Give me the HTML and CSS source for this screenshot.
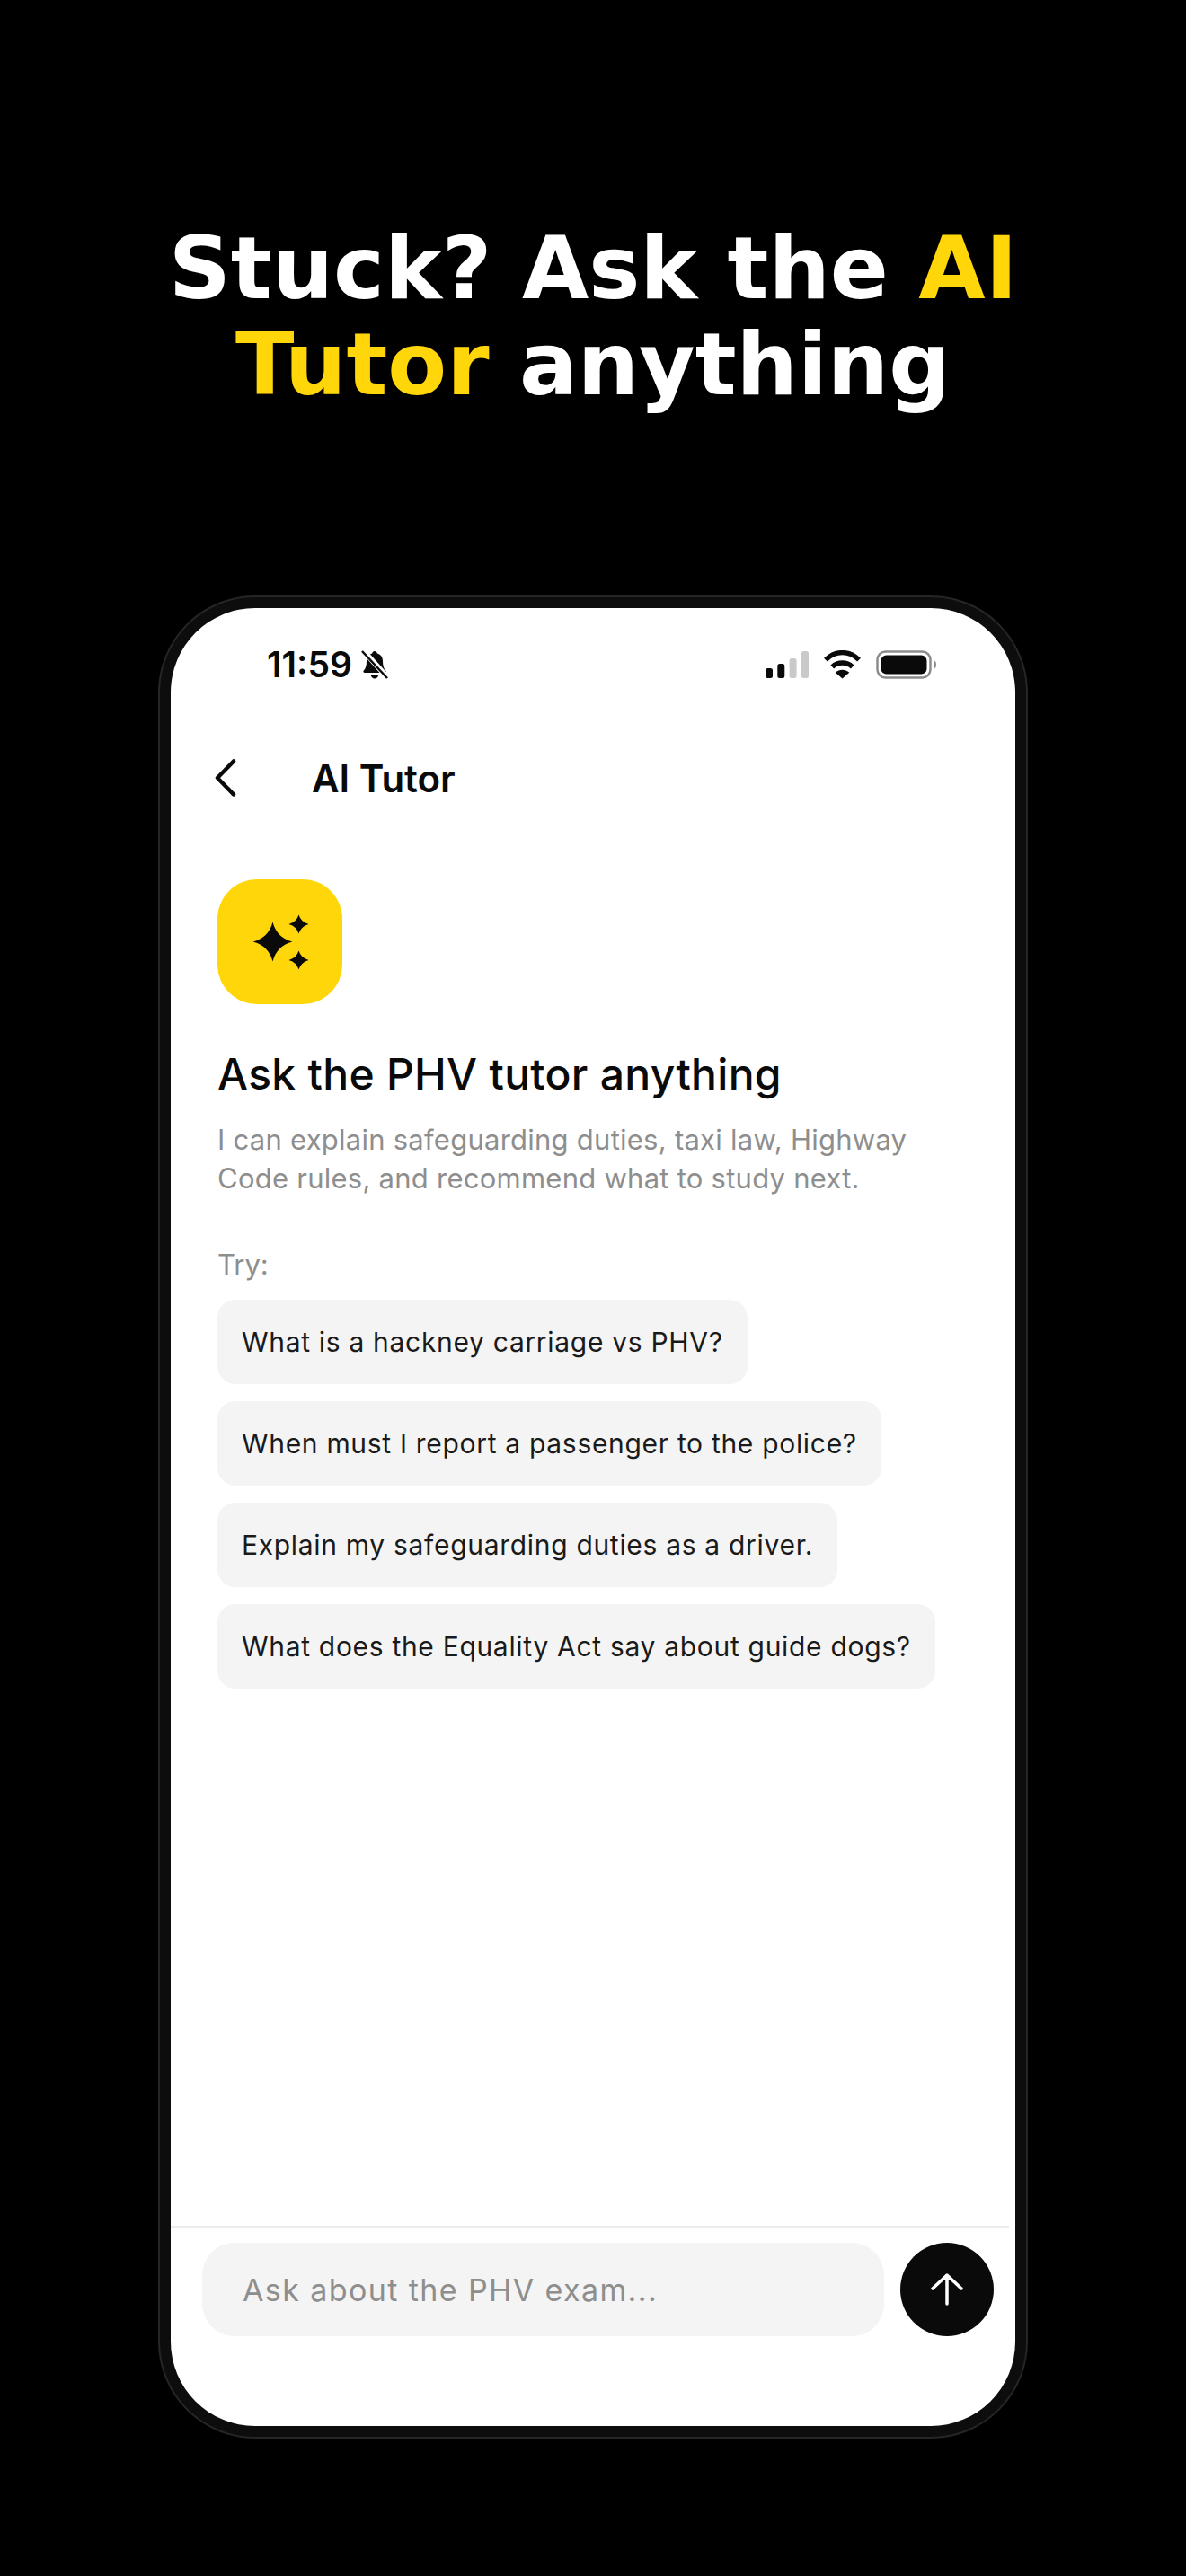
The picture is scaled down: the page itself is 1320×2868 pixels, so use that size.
FILE: index.html
```html
<!DOCTYPE html>
<html lang="en">
<head>
  <meta charset="UTF-8">
  <title>AI Tutor</title>
  <link rel="stylesheet" href="styles.css">
</head>
<body>
  <h1 class="headline">Stuck? Ask the <span class="accent">AI<br>Tutor</span> anything</h1>

  <div class="phone">
    <div class="screen">
      <div class="status">
        <div class="status-left">
          <span class="time">11:59</span>
          <svg class="bell" viewBox="0 0 32 32" width="32" height="32">
            <path d="M16 1c1.600 0 2.600 1 2.800 2.400 4 1 6.200 4.400 6.200 8.600 0 5 1 8.400 3.200 10.600.9.900.3 2.400-1 2.400H4.800c-1.300 0-1.900-1.500-1-2.400C6 20.400 7 17 7 12c0-4.200 2.200-7.600 6.200-8.600C13.400 2 14.400 1 16 1z" fill="#0a0a0a"/>
            <path d="M11.500 27h9c-.4 2.500-2.200 4.500-4.500 4.500s-4.100-2-4.500-4.500z" fill="#0a0a0a"/>
            <path d="M3 0l27 30" stroke="#fff" stroke-width="6"/>
            <path d="M2 1l28 30" stroke="#0a0a0a" stroke-width="2.500"/>
          </svg>
        </div>
        <div class="status-right">
          <svg viewBox="0 0 48 30" width="48" height="30">
            <rect x="0" y="19" width="8" height="11" rx="2.500" fill="#0a0a0a"/>
            <rect x="13.300" y="14" width="8" height="16" rx="2.500" fill="#0a0a0a"/>
            <rect x="26.600" y="8" width="8" height="22" rx="2.500" fill="#c9c9c9"/>
            <rect x="40" y="0" width="8" height="30" rx="2.500" fill="#c9c9c9"/>
          </svg>
          <svg viewBox="0 0 42 32" width="41" height="32">
            <path d="M2 10.500C13 -.5 29 -.5 40 10.500" fill="none" stroke="#0a0a0a" stroke-width="5.500"/>
            <path d="M9.500 18.500c6.500-6 16.500-6 23 0" fill="none" stroke="#0a0a0a" stroke-width="5.500"/>
            <path d="M13 25c4.500-4 11.500-4 16 0L21 32z" fill="#0a0a0a"/>
          </svg>
          <svg viewBox="0 0 67 32" width="67" height="32">
            <rect x="1.500" y="1.500" width="59" height="29" rx="9" fill="none" stroke="#8c8c8c" stroke-width="2.500"/>
            <rect x="5.500" y="5.500" width="51" height="21" rx="6" fill="#0a0a0a"/>
            <path d="M64 11c2 .6 3 2.600 3 5s-1 4.400-3 5z" fill="#8c8c8c"/>
          </svg>
        </div>
      </div>

      <div class="topbar">
        <svg class="back" viewBox="0 0 28 44" width="28" height="44">
          <path d="M24 3.500L6 22l18 18.500" fill="none" stroke="#0a0a0a" stroke-width="4.500" stroke-linecap="round" stroke-linejoin="round"/>
        </svg>
        <span class="topbar-title">AI Tutor</span>
      </div>

      <div class="content">
        <div class="spark-box">
          <svg viewBox="0 0 64 64" width="64" height="64">
            <path d="M23.500 9.500Q28 27 45.500 31.500Q28 36 23.500 53.500Q19 36 1.500 31.500Q19 27 23.500 9.500z" fill="#0a0a0a"/>
            <path d="M52.500 1.500Q55 9.500 63.500 12Q55 14.500 52.500 22.500Q50 14.500 41.500 12Q50 9.500 52.500 1.500z" fill="#0a0a0a"/>
            <path d="M52.500 41.500Q55 49.500 63.500 52Q55 54.500 52.500 62.500Q50 54.500 41.500 52Q50 49.500 52.500 41.500z" fill="#0a0a0a"/>
          </svg>
        </div>
        <h2 class="intro-title">Ask the PHV tutor anything</h2>
        <p class="intro-text">I can explain safeguarding duties, taxi law, Highway<br>Code rules, and recommend what to study next.</p>
        <div class="try">Try:</div>
        <div class="chips">
          <div class="chip">What is a hackney carriage vs PHV?</div>
          <div class="chip">When must I report a passenger to the police?</div>
          <div class="chip">Explain my safeguarding duties as a driver.</div>
          <div class="chip">What does the Equality Act say about guide dogs?</div>
        </div>
      </div>

      <div class="composer">
        <div class="ask-input">Ask about the PHV exam...</div>
        <div class="send">
          <svg viewBox="0 0 40 40" width="40" height="40">
            <path d="M20 36V4M4 19L20 4l16 15" fill="none" stroke="#fff" stroke-width="3.500" stroke-linecap="round" stroke-linejoin="round"/>
          </svg>
        </div>
      </div>
    </div>
  </div>
</body>
</html>
```

FILE: styles.css
```css
* {
  box-sizing: border-box;
}
body {
  margin: 0;
  width: 1320px;
  height: 2868px;
  background: #000;
  font-family: Inter, "Liberation Sans", sans-serif;
  color: #0a0a0a;
  overflow: hidden;
}
.headline {
  margin: 0;
  padding-top: 246px;
  height: 663px;
  font-family: "DejaVu Sans", sans-serif;
  font-size: 96px;
  line-height: 107px;
  font-weight: 700;
  text-align: center;
  color: #fff;
}
.accent {
  color: #ffd60a;
}
.phone {
  width: 968px;
  height: 2052px;
  margin-left: 176px;
  padding: 12px;
  background: #0d0d0d;
  border: 2px solid #262626;
  border-radius: 108px;
}
.screen {
  height: 100%;
  background: #fff;
  border-radius: 94px;
  display: flex;
  flex-direction: column;
  overflow: hidden;
}
.status {
  height: 86px;
  padding: 0 88px 0 107px;
  display: flex;
  align-items: flex-end;
  justify-content: space-between;
}
.status-left {
  display: flex;
  align-items: center;
  gap: 9px;
}
.time {
  font-size: 39px;
  line-height: 46px;
  font-weight: 600;
}
.status-right {
  display: flex;
  align-items: center;
  gap: 17px;
  padding-bottom: 7px;
}
.topbar {
  height: 76px;
  margin-top: 65px;
  padding-left: 46px;
  display: flex;
  align-items: center;
  gap: 83px;
}
.topbar-title {
  font-size: 42px;
  font-weight: 600;
}
.content {
  flex: 1;
  padding: 75px 52px 0;
}
.spark-box {
  width: 139px;
  height: 139px;
  border-radius: 44px;
  background: #ffd60a;
  display: flex;
  align-items: center;
  justify-content: center;
}
.intro-title {
  margin: 48px 0 0;
  font-size: 48px;
  line-height: 60px;
  font-weight: 500;
  letter-spacing: 0.3px;
}
.intro-text {
  margin: 21px 0 0;
  font-size: 31px;
  line-height: 43px;
  letter-spacing: 0.25px;
  color: #8e8e8e;
}
.try {
  margin-top: 55px;
  font-size: 31px;
  line-height: 40px;
  color: #8e8e8e;
}
.chips {
  margin-top: 19px;
  display: flex;
  flex-direction: column;
  align-items: flex-start;
  gap: 19px;
}
.chip {
  height: 94px;
  padding: 0 27px;
  display: flex;
  align-items: center;
  border-radius: 20px;
  background: #f4f4f4;
  font-size: 30px;
  letter-spacing: 0.69px;
  color: #1a1a1a;
}
.composer {
  width: 933px;
  height: 223px;
  border-top: 3px solid #ececec;
  padding: 16px 0 0 35px;
  display: flex;
  align-items: flex-start;
  gap: 18px;
}
.ask-input {
  width: 759px;
  height: 104px;
  padding-left: 45px;
  display: flex;
  align-items: center;
  border-radius: 36px;
  background: #f4f4f4;
  font-size: 34px;
  letter-spacing: 1.4px;
  color: #8e8e8e;
}
.send {
  width: 104px;
  height: 104px;
  border-radius: 50%;
  background: #0a0a0a;
  display: flex;
  align-items: center;
  justify-content: center;
}
```
